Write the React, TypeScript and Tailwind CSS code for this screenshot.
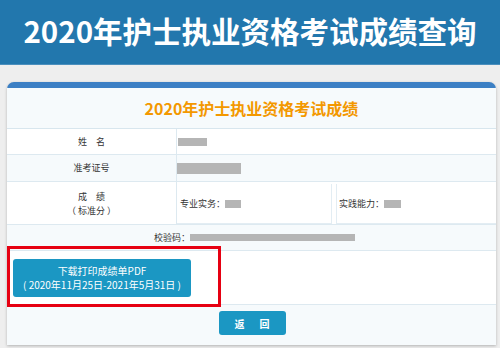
import React from 'react';

const CJK = { fontFamily: '"Noto Sans CJK SC", "Noto Sans", sans-serif' };

function Blur({ w, h = 8 }: { w: number; h?: number }) {
  return <span className="inline-block bg-[#b5b5b5] blur-[0.6px]" style={{ width: w, height: h }} />;
}

export default function App() {
  return (
    <div className="w-[500px] h-[348px] overflow-hidden bg-[#eeeeee]" style={CJK}>
      <div className="h-[65px] bg-[#2277ad] flex items-center justify-center pb-[3px] border-b border-[#4b8fbd]">
        <h1 className="text-white text-[29.5px] font-bold leading-none whitespace-nowrap">2020年护士执业资格考试成绩查询</h1>
      </div>

      <div className="mt-[17px] ml-[7px] mr-[4px] bg-white rounded-t-[7px] border-t-[6px] border-[#3b7fc4] shadow-[0_1px_3px_rgba(0,0,0,0.25)]">
        <div className="h-[41px] bg-[#f6fafc] flex items-center justify-center border-b border-[#d8e6ee]">
          <h2 className="text-[#f39800] text-[16px] font-bold leading-none whitespace-nowrap">2020年护士执业资格考试成绩</h2>
        </div>

        <div className="grid grid-cols-[170px_1fr] h-[26px] border-b border-[#dde9f0] text-[9px] text-[#333]">
          <div className="flex items-center justify-center border-r border-[#dde9f0]">姓　名</div>
          <div className="flex items-center pl-[1px]"><Blur w={29} /></div>
        </div>

        <div className="grid grid-cols-[170px_1fr] h-[27px] border-b border-[#dde9f0] bg-[#f6fafc] text-[9px] text-[#333]">
          <div className="flex items-center justify-center border-r border-[#dde9f0]">准考证号</div>
          <div className="flex items-center"><Blur w={64} h={11} /></div>
        </div>

        <div className="grid grid-cols-[170px_1fr] h-[43px] border-b border-[#dde9f0] text-[9px] text-[#333]">
          <div className="flex flex-col items-center justify-center gap-[5px] border-r border-[#dde9f0] leading-none">
            <span>成　绩</span>
            <span>（ 标准分 ）</span>
          </div>
          <div className="flex gap-[4px] pt-[2px]">
            <div className="flex-1 flex items-center pl-[3px] border-r border-b border-[#e3edf3]">
              专业实务：<Blur w={16} />
            </div>
            <div className="w-[160px] flex items-center pl-[2px] border-l border-b border-[#e3edf3]">
              实践能力：<Blur w={17} />
            </div>
          </div>
        </div>

        <div className="h-[26px] bg-[#f6fafc] border-b border-[#dde9f0] flex items-center justify-center text-[9px] text-[#333] pl-[6px]">
          校验码：<Blur w={165} h={7} />
        </div>

        <div className="relative h-[54px] border-b border-[#dde9f0] flex items-center px-[6px]">
          <button className="w-[178px] h-[38px] rounded-[3px] bg-[#1b97c3] text-white text-[10px] leading-[14px] flex flex-col items-center justify-center">
            <span>下载打印成绩单PDF</span>
            <span>( 2020年11月25日-2021年5月31日 )</span>
          </button>
          <div className="absolute left-0 -top-[5px] w-[214px] h-[61px] border-[3px] border-[#e60012]" />
        </div>

        <div className="h-[40px] bg-[#f6fafc] flex items-start justify-center pt-[6px] pl-[1px]">
          <button className="w-[67px] h-[24px] rounded-[3px] bg-[#1b97c3] text-white text-[10px] font-bold flex items-center justify-center gap-[15px]">
            <span>返</span>
            <span>回</span>
          </button>
        </div>
      </div>
    </div>
  );
}
